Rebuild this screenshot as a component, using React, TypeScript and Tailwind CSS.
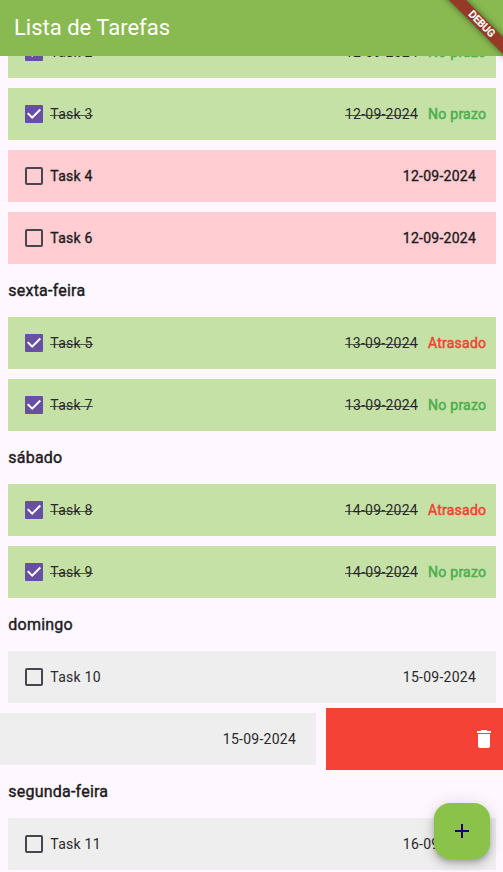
import React from "react";

type Task = {
  name: string;
  date: string;
  kind: "done" | "late" | "open";
  status?: "No prazo" | "Atrasado";
};

const backgrounds = {
  done: "bg-[#c5e1a5]",
  late: "bg-[#ffcdd2]",
  open: "bg-[#eeeeee]",
};

function Checkbox({ checked }: { checked: boolean }) {
  return (
    <svg className="ml-[17px] size-[18px] shrink-0" viewBox="0 0 18 18" fill="none">
      {checked ? (
        <>
          <rect width="18" height="18" rx="1" fill="#6750a4" />
          <path d="M2.7 8.1 7.2 12.6 15.3 4.5" stroke="#fff" strokeWidth="2" />
        </>
      ) : (
        <rect x="1" y="1" width="16" height="16" rx="1" stroke="#49454f" strokeWidth="2" />
      )}
    </svg>
  );
}

function TaskRow({ name, date, kind, status }: Task) {
  const text =
    kind === "done"
      ? "relative text-[#29282b] after:absolute after:inset-x-0 after:top-[11px] after:h-px after:bg-[#1d1b20]/70"
      : kind === "late"
        ? "text-[#1d1b20] [-webkit-text-stroke:0.35px_currentColor]"
        : "text-[#29282b]";
  return (
    <div className="py-[5px] pr-[7px] pl-2">
      <div className={`flex h-[52px] items-center ${backgrounds[kind]}`}>
        <Checkbox checked={kind === "done"} />
        <span className={`ml-[7.300px] ${text}`}>{name}</span>
        <span className={`ml-auto ${status ? "mr-[10px]" : "mr-5"} ${text}`}>{date}</span>
        {status && (
          <span
            className={`mr-[9.700px] [-webkit-text-stroke:0.5px_currentColor] ${status === "No prazo" ? "text-[#4caf50]" : "text-[#f44336]"}`}
          >
            {status}
          </span>
        )}
      </div>
    </div>
  );
}

function Day({ children }: { children: string }) {
  return (
    <h2 className="flex h-[43px] items-center pl-[8.300px] text-base tracking-[0.22px] text-[#1d1b20] [-webkit-text-stroke:0.4px_currentColor]">
      {children}
    </h2>
  );
}

export default function App() {
  return (
    <div className="relative flex h-[872px] w-[503px] flex-col overflow-hidden bg-[#fef7ff] font-[Roboto,sans-serif] text-sm tracking-[0.25px]">
      <header className="z-10 flex h-14 shrink-0 items-center bg-[#89b951] pl-[14px]">
        <h1 className="text-[22px] tracking-normal text-white">Lista de Tarefas</h1>
      </header>

      <main className="min-h-0 flex-1">
        <div className="-mt-[35px]">
          <TaskRow name="Task 2" date="12-09-2024" kind="done" status="No prazo" />
          <TaskRow name="Task 3" date="12-09-2024" kind="done" status="No prazo" />
          <TaskRow name="Task 4" date="12-09-2024" kind="late" />
          <TaskRow name="Task 6" date="12-09-2024" kind="late" />
          <Day>sexta-feira</Day>
          <TaskRow name="Task 5" date="13-09-2024" kind="done" status="Atrasado" />
          <TaskRow name="Task 7" date="13-09-2024" kind="done" status="No prazo" />
          <Day>sábado</Day>
          <TaskRow name="Task 8" date="14-09-2024" kind="done" status="Atrasado" />
          <TaskRow name="Task 9" date="14-09-2024" kind="done" status="No prazo" />
          <Day>domingo</Day>
          <TaskRow name="Task 10" date="15-09-2024" kind="open" />
          <div className="flex h-[62px] items-center">
            <div className="mr-[10px] flex h-[52px] w-[316px] items-center justify-end bg-[#eeeeee] pr-5 text-[#29282b]">
              15-09-2024
            </div>
            <div className="flex h-full flex-1 items-center justify-end bg-[#f44336] pr-[7px]">
              <svg className="size-6" viewBox="0 0 24 24" fill="#fff">
                <path d="M6 19c0 1.100.9 2 2 2h8c1.100 0 2-.9 2-2V7H6v12zM19 4h-3.500l-1-1h-5l-1 1H5v2h14V4z" />
              </svg>
            </div>
          </div>
          <Day>segunda-feira</Day>
          <TaskRow name="Task 11" date="16-09-2024" kind="open" />
        </div>
      </main>

      <button className="absolute top-[803px] left-[434px] z-20 flex size-14 items-center justify-center rounded-2xl bg-[#8bc34a] shadow-[0_3px_5px_-1px_rgba(0,0,0,0.2),0_6px_10px_rgba(0,0,0,0.14),0_1px_18px_rgba(0,0,0,0.12)]">
        <svg className="size-6" viewBox="0 0 24 24" fill="#21005d">
          <path d="M19 13h-6v6h-2v-6H5v-2h6V5h2v6h6v2z" />
        </svg>
      </button>

      <div className="absolute top-[17px] left-[430px] z-20 flex h-3 w-[101px] rotate-45 items-center justify-center bg-[#943a26] pl-[3px] text-[10.2px] leading-3 tracking-normal text-white shadow-[0_0_6px_rgba(0,0,0,0.5)] [-webkit-text-stroke:0.5px_currentColor]">
        DEBUG
      </div>
    </div>
  );
}
